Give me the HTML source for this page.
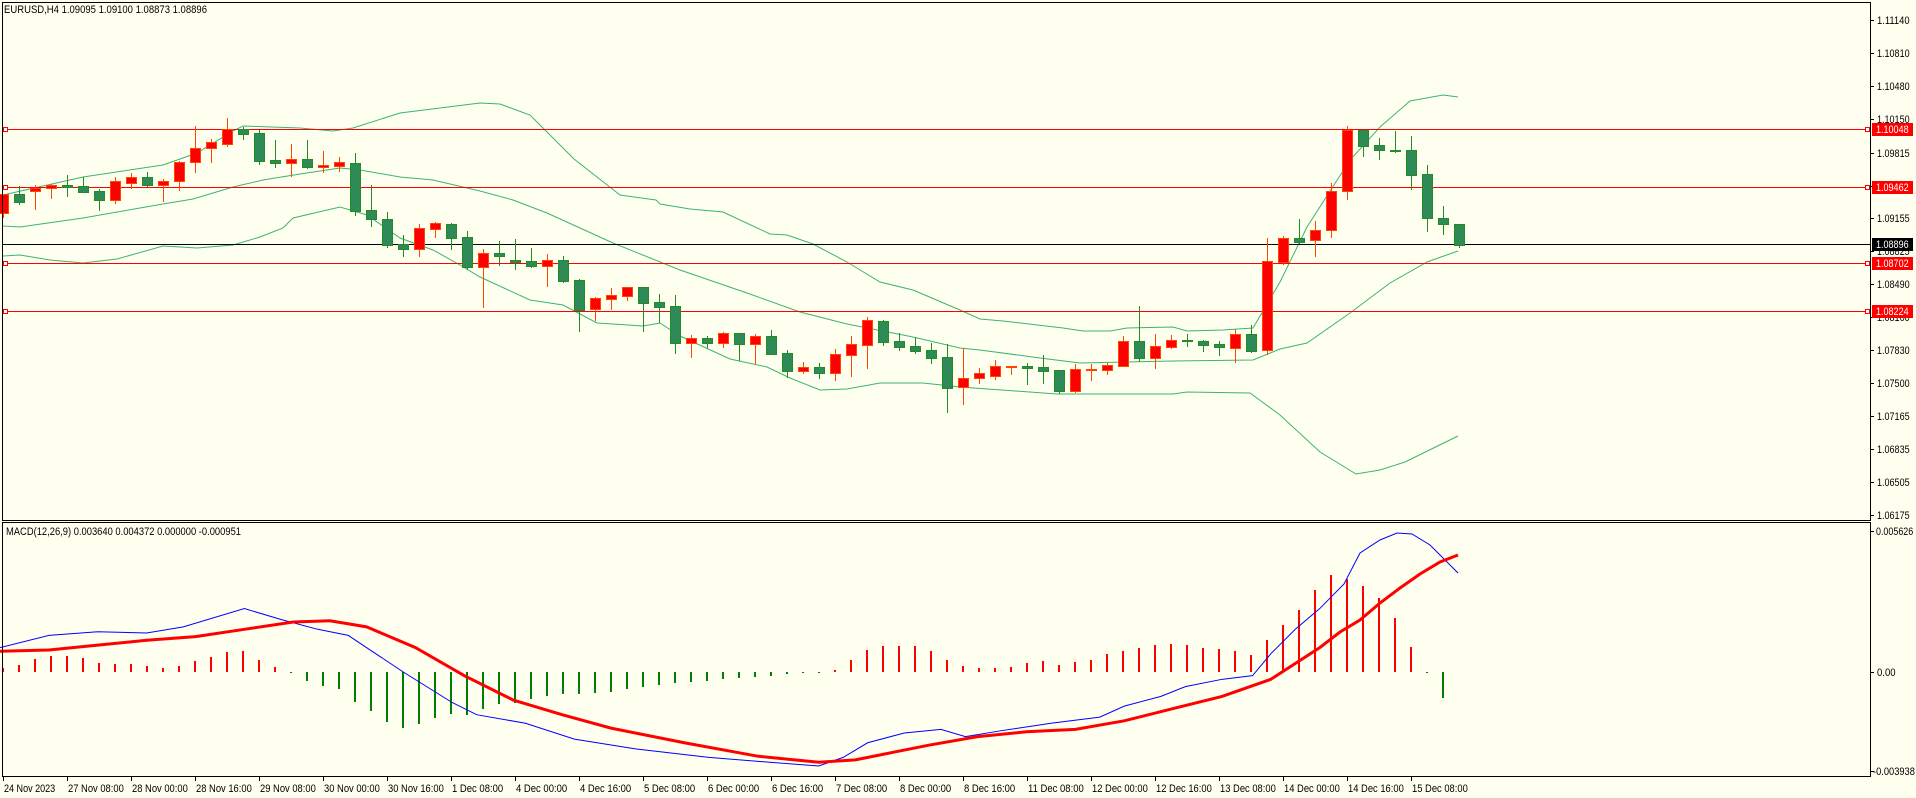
<!DOCTYPE html>
<html><head><meta charset="utf-8"><style>
html,body{margin:0;padding:0;background:#FFFFF0;}
svg{display:block;font-family:"Liberation Sans",Tahoma,sans-serif;font-size:11px;}
</style></head><body>
<svg id="s" width="1916" height="798" viewBox="0 0 1916 798" xmlns="http://www.w3.org/2000/svg">
<rect width="1916" height="798" fill="#FFFFF0"/>
<g id="bands" fill="none" stroke="#3CB371" stroke-width="1"></g>
<g id="hl"></g>
<g id="candles"></g>
<g id="macd"></g>
<rect x="2.5" y="2.5" width="1868" height="518" fill="none" stroke="#000" stroke-width="1"/>
<rect x="2.5" y="522.5" width="1868" height="254" fill="none" stroke="#000" stroke-width="1"/>
<text x="4" y="13" fill="#000" textLength="203" lengthAdjust="spacingAndGlyphs">EURUSD,H4  1.09095 1.09100 1.08873 1.08896</text>
<text x="6" y="535" fill="#000" textLength="235" lengthAdjust="spacingAndGlyphs">MACD(12,26,9) 0.003640 0.004372 0.000000 -0.000951</text>
<g id="axis" fill="#000"></g>
</svg>
<script>
var NS="http://www.w3.org/2000/svg";
function el(p,t,a,txt){var e=document.createElementNS(NS,t);for(var k in a)e.setAttribute(k,a[k]);if(txt!==undefined)e.textContent=txt;document.getElementById(p).appendChild(e);return e;}
function tx(p,x,y,s,fill){var a={x:x,y:y,textLength:(s.length*4.65).toFixed(1),lengthAdjust:"spacingAndGlyphs"};if(fill)a.fill=fill;return el(p,"text",a,s);}
function pl(pts){return pts.map(function(p){return p[0]+","+p[1]}).join(" ");}
var up=[[3,195],[83,177],[163,165],[197,153],[233,131],[243,126],[300,128],[333,131],[353,128],[400,113],[480,103],[500,104],[530,115],[574,159],[620,195],[656,200],[660,204],[690,209],[723,212],[770,234],[787,235],[813,244],[847,262],[880,282],[913,290],[960,310],[980,319],[1003,321],[1063,328],[1083,331],[1110,331],[1127,328],[1173,327],[1187,331],[1223,330],[1253,328],[1280,282],[1307,227],[1350,160],[1380,127],[1410,101],[1443,95],[1458,97]];
var mid=[[3,226],[20,227],[83,218],[163,204],[193,199],[233,187],[263,180],[300,174],[340,168],[360,170],[400,177],[433,180],[480,191],[513,200],[547,213],[613,243],[680,270],[747,293],[800,312],[847,324],[913,337],[960,348],[980,350],[1040,358],[1080,363],[1173,361],[1253,360],[1280,349],[1307,343],[1350,313],[1390,283],[1427,262],[1458,251]];
var lo=[[3,256],[20,255],[50,260],[83,263],[117,259],[163,246],[197,248],[233,245],[260,237],[283,228],[293,218],[340,207],[367,215],[400,238],[433,250],[460,265],[480,277],[530,300],[563,305],[597,323],[643,326],[660,323],[680,336],[730,359],[767,367],[790,378],[820,390],[847,389],[880,383],[923,383],[960,387],[1057,394],[1173,394],[1187,392],[1250,393],[1280,415],[1320,452],[1356,474],[1380,470],[1405,462],[1458,436]];
[up,mid,lo].forEach(function(a){el("bands","polyline",{points:pl(a)});});
[[129,"#FF0000"],[187,"#FF0000"],[263,"#FF0000"],[311,"#FF0000"]].forEach(function(h){
 el("hl","line",{x1:3,x2:1870,y1:h[0]+.5,y2:h[0]+.5,stroke:h[1]});
 el("hl","rect",{x:3.5,y:h[0]-2+.5,width:4,height:4,fill:"#fff",stroke:h[1]});
 el("hl","rect",{x:1865.5,y:h[0]-2+.5,width:4,height:4,fill:"#fff",stroke:h[1]});
});
el("hl","line",{x1:3,x2:1870,y1:244.5,y2:244.5,stroke:"#000"});
var C=[["r",194,213,194,217],["g",194,202,186,204],["r",188,191,185,209],["r",185,188,184,198],["g",185,187,175,196],["g",186,192,177,192],["g",191,200,189,210],["r",181,200,177,203],["r",177,183,173,188],["g",177,185,172,186],
["r",181,185,179,201],["r",162,181,161,190],["r",148,162,126,172],["r",142,148,139,162],["r",129,144,118,146],["g",129,134,127,139],["g",133,161,130,164],["g",160,163,140,167],["r",159,163,144,176],["g",159,167,140,168],
["r",165,167,151,172],["r",162,166,157,171],["g",163,211,153,215],["g",210,219,185,226],["g",219,245,212,247],["g",244,249,235,256],["r",228,249,224,256],["r",223,229,222,237],["g",224,238,223,249],["g",237,267,231,269],
["r",253,267,249,307],["g",253,256,241,265],["g",260,262,239,269],["g",261,266,248,267],["r",260,266,254,286],["g",260,281,256,282],["g",280,310,279,331],["r",298,309,297,320],["r",295,299,288,309],["r",287,296,287,300],
["g",287,303,287,331],["g",302,307,294,322],["g",306,343,295,353],["r",338,343,335,357],["g",338,343,336,347],["r",333,343,332,347],["g",333,344,333,360],["r",336,344,334,363],["g",336,354,330,354],["g",353,371,350,377],
["r",367,371,362,373],["g",367,373,363,378],["r",354,373,349,380],["r",344,355,336,376],["r",320,345,317,368],["g",321,342,320,345],["g",341,347,333,350],["g",346,351,337,353],["g",350,358,343,363],["g",357,388,344,412],
["r",378,387,348,404],["r",373,378,368,383],["r",366,376,360,379],["r",366,367,366,374],["g",366,368,363,384],["g",367,371,355,383],["g",370,391,370,393],["r",369,391,364,392],["r",369,370,364,380],["r",365,370,363,374],
["r",341,366,336,366],["g",341,358,306,361],["r",346,358,334,368],["r",340,347,335,348],["g",340,341,334,346],["g",341,345,340,351],["g",344,347,341,355],["r",334,348,329,362],["g",334,351,325,352],["r",261,350,238,354],
["r",238,262,236,264],["g",238,242,219,243],["r",230,240,221,256],["r",191,230,183,237],["r",130,191,126,199],["g",130,146,130,156],["g",145,150,138,159],["g",150,151,131,152],["g",150,175,136,189],["g",174,218,165,231],
["g",218,224,206,234],["g",224,245,224,247]];
C.forEach(function(c,i){
 var x=3+16*i;
 var wc=c[0]=="r"?"#FF4500":"#228B22", fc=c[0]=="r"?"#FF0000":"#2E8B57";
 el("candles","line",{x1:x+.5,x2:x+.5,y1:c[3],y2:c[4]+1,stroke:wc});
 var h=Math.max(c[2]-c[1],1);
 el("candles","rect",{x:x-4.5,y:c[1]+.5,width:10,height:h,fill:fc,stroke:wc});
});
var H=[668,665,659,656,656,658,663,664,664,666,668,666,661,657,652,651,660,667,673,681,686,689,702,711,722,728,724,718,714,715,709,704];
var D=[575,572,570,568,568,567,566,564,562,561,559,558,557,556,555,554,553,552,551,550.5];
D.forEach(function(d){H.push(Math.round(672+(d-550)*1.22));});
var P=[548,540,532,529,529,529,533,540,545,547,547,546,543,541,544,542,540,535,533,530,528,527,528,530,531,533];
P.forEach(function(d){H.push(Math.round(672+(d-550)*1.22));});
H=H.concat([655,640,625,610,590,575,579,586,598,618,647,672,698]);
H.forEach(function(t,i){
 var x=3+16*i;
 if(t<672) el("macd","rect",{x:x-1,y:t,width:2,height:672-t,fill:"#FF0000"});
 else el("macd","rect",{x:x-1,y:672,width:2,height:Math.max(t-672,1),fill:"#008000"});
});
function conv(a){return a.map(function(p){return [p[0]*1.222,672+(p[1]-550)*1.22];});}
var blue=conv([[0,530],[40,520],[80,517],[120,518],[150,513],[200,498],[230,507],[260,515],[285,520],[330,550],[370,575],[390,585],[430,592],[470,605],[520,613],[580,620],[630,624],[670,627],[690,620],[710,608],[740,600],[770,597],[790,603],[820,598],[860,592],[900,587],[920,578],[950,570],[970,562],[1000,556],[1025,553],[1040,535],[1060,515],[1080,498]]).concat([[1344,584],[1360,553],[1380,540],[1397,533],[1412,534],[1430,545],[1458,573]]);
var red=conv([[0,533],[40,532],[80,528],[120,524],[160,521],[200,515],[240,509],[270,508],[300,513],[340,530],[380,553],[420,573],[460,585],[500,596],[560,608],[620,619],[670,624],[700,622],[760,610],[800,603],[840,599],[880,597],[920,590],[960,580],[1000,570],[1040,556],[1080,530]]).concat([[1340,632],[1360,620],[1380,603],[1400,588],[1420,574],[1440,562],[1458,555]]);
el("macd","polyline",{points:pl(blue),fill:"none",stroke:"#0000FF","stroke-width":1});
el("macd","polyline",{points:pl(red),fill:"none",stroke:"#FF0000","stroke-width":3});
[["1.11140",20],["1.10810",53],["1.10480",86],["1.10150",119],["1.09815",153],["1.09485",186],["1.09155",218],["1.08825",251],["1.08490",284],["1.08160",317],["1.07830",350],["1.07500",383],["1.07165",416],["1.06835",449],["1.06505",482],["1.06175",515]].forEach(function(a){
 el("axis","rect",{x:1871,y:a[1],width:3,height:1,fill:"#000"});
 tx("axis",1877,a[1]+4,a[0]);
});
[[129,"1.10048","#FF0000"],[187,"1.09462","#FF0000"],[263,"1.08702","#FF0000"],[311,"1.08224","#FF0000"],[244,"1.08896","#000"]].forEach(function(h){
 el("axis","rect",{x:1872,y:h[0]-6,width:41,height:13,fill:h[2]});
 tx("axis",1876,h[0]+4,h[1],"#fff");
});
[["0.005626",531,1876],["0.00",672,1877],["-0.003938",771,1873]].forEach(function(a){
 el("axis","rect",{x:1871,y:a[1],width:3,height:1,fill:"#000"});
 tx("axis",a[2],a[1]+4,a[0]);
});
var T=["24 Nov 2023","27 Nov 08:00","28 Nov 00:00","28 Nov 16:00","29 Nov 08:00","30 Nov 00:00","30 Nov 16:00","1 Dec 08:00","4 Dec 00:00","4 Dec 16:00","5 Dec 08:00","6 Dec 00:00","6 Dec 16:00","7 Dec 08:00","8 Dec 00:00","8 Dec 16:00","11 Dec 08:00","12 Dec 00:00","12 Dec 16:00","13 Dec 08:00","14 Dec 00:00","14 Dec 16:00","15 Dec 08:00"];
T.forEach(function(t,i){var x=3+64*i;
 el("axis","rect",{x:x,y:777,width:1,height:4,fill:"#000"});
 tx("axis",x+1,792,t);
});
</script>
</body></html>
